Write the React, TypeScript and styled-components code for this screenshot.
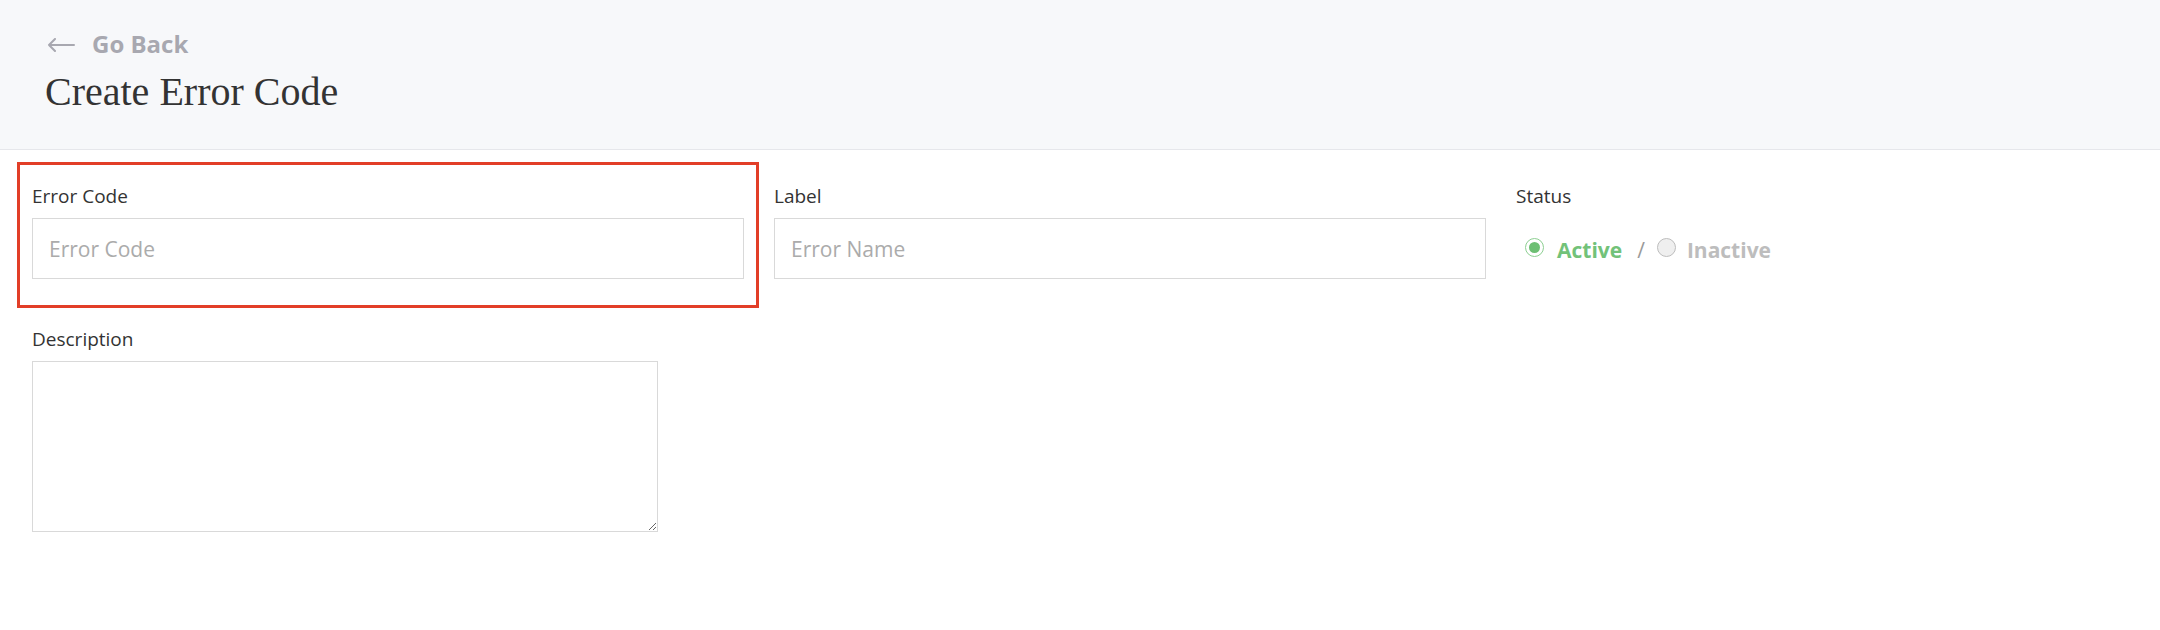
import * as React from 'react'
import styled, { createGlobalStyle } from 'styled-components'

const SANS = `'Open Sans', 'Liberation Sans', sans-serif`

const GlobalStyle = createGlobalStyle`
  html, body {
    margin: 0;
    padding: 0;
    background: #ffffff;
    font-family: ${SANS};
  }
  * { box-sizing: border-box; }
`

const Header = styled.div`
  background: #f7f8fa;
  border-bottom: 1px solid #e6e7eb;
  padding: 32px 0 37px 47px;
`

const BackLink = styled.a`
  display: flex;
  align-items: center;
  gap: 17px;
  height: 24px;
  color: #a8a8b0;
  font-size: 24px;
  line-height: 24px;
  font-weight: 700;
  text-decoration: none;
  cursor: pointer;
  svg { margin-top: 2px; }
`

const Title = styled.h1`
  margin: 16px 0 0 -2px;
  font-family: 'Liberation Serif', serif;
  font-weight: 400;
  font-size: 40px;
  line-height: 40px;
  color: #333333;
`

const Form = styled.div`
  padding: 12px 0 0 17px;
`

const Row = styled.div<{ $overlap?: boolean }>`
  display: grid;
  grid-template-columns: repeat(3, 742px);
  margin-top: ${p => (p.$overlap ? '-3px' : '0')};
`

const Field = styled.div<{ $focused?: boolean }>`
  padding: 25px 15px 29px;
  box-shadow: ${p => (p.$focused ? 'inset 0 0 0 3px #e23e28' : 'none')};
`

const Label = styled.label`
  display: block;
  margin-bottom: 12px;
  font-size: 19px;
  line-height: 19px;
  color: #333333;
`

const TextInput = styled.input`
  display: block;
  width: 100%;
  height: 61px;
  padding: 0 16px;
  border: 1px solid #d9d9d9;
  border-radius: 0;
  outline: none;
  font-family: ${SANS};
  font-size: 21px;
  color: #333333;
  &::placeholder { color: #ababab; }
`

const TextArea = styled.textarea`
  display: block;
  width: 626px;
  height: 171px;
  border: 1px solid #d9d9d9;
  border-radius: 0;
  outline: none;
  padding: 12px 16px;
  font-family: ${SANS};
  font-size: 19px;
`

const RadioGroup = styled.div`
  display: flex;
  align-items: center;
  height: 61px;
  padding-left: 9px;
`

const Radio = styled.span<{ $checked?: boolean }>`
  position: relative;
  width: 19px;
  height: 19px;
  margin-bottom: 3px;
  border-radius: 50%;
  border: 1px solid ${p => (p.$checked ? '#8dcf92' : '#bdbdbd')};
  background: ${p => (p.$checked ? '#ffffff' : '#efefef')};
  &::after {
    content: '';
    display: ${p => (p.$checked ? 'block' : 'none')};
    position: absolute;
    inset: 3px;
    border-radius: 50%;
    background: #6dbf73;
  }
`

const Option = styled.span<{ $checked?: boolean; $gap: number }>`
  margin-left: ${p => p.$gap}px;
  padding-top: 4px;
  font-size: 21px;
  line-height: 21px;
  font-weight: 700;
  color: ${p => (p.$checked ? '#72c279' : '#bdbdbd')};
`

const Slash = styled.span`
  margin: 0 12px 0 15px;
  padding-top: 4px;
  font-size: 21px;
  line-height: 21px;
  color: #9a9a9a;
`

const BackArrow = () => (
  <svg width="28" height="14" viewBox="0 0 28 14" fill="none">
    <path d="M27 7H2M8 1L2 7l6 6" stroke="#a8a8b0" strokeWidth="2" strokeLinecap="round" strokeLinejoin="round" />
  </svg>
)

export default function App() {
  return (
    <>
      <GlobalStyle />
      <Header>
        <BackLink>
          <BackArrow />
          Go Back
        </BackLink>
        <Title>Create Error Code</Title>
      </Header>
      <Form>
        <Row>
          <Field $focused>
            <Label>Error Code</Label>
            <TextInput placeholder="Error Code" />
          </Field>
          <Field>
            <Label>Label</Label>
            <TextInput placeholder="Error Name" />
          </Field>
          <Field>
            <Label>Status</Label>
            <RadioGroup>
              <Radio $checked />
              <Option $checked $gap={13}>Active</Option>
              <Slash>/</Slash>
              <Radio />
              <Option $gap={11}>Inactive</Option>
            </RadioGroup>
          </Field>
        </Row>
        <Row $overlap>
          <Field>
            <Label>Description</Label>
            <TextArea />
          </Field>
        </Row>
      </Form>
    </>
  )
}
